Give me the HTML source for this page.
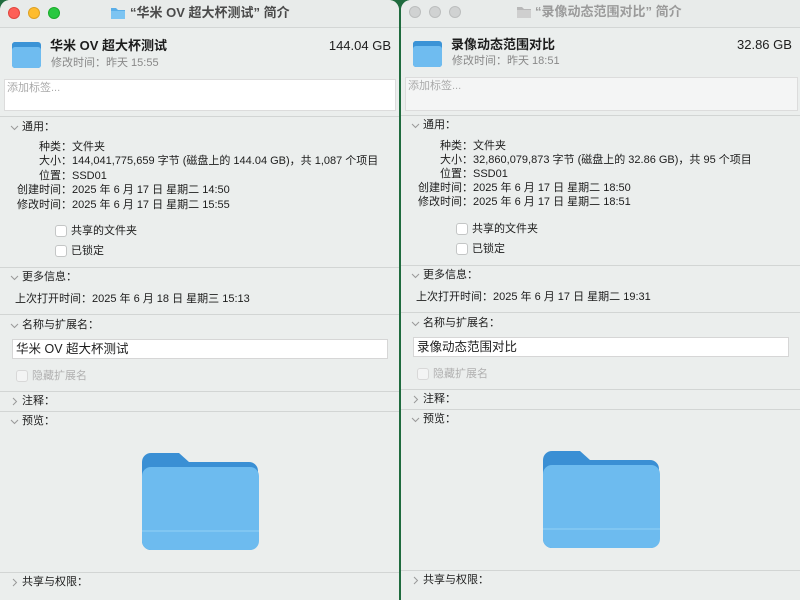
<!DOCTYPE html>
<html><head><meta charset="utf-8"><style>
*{margin:0;padding:0;box-sizing:border-box}
body{width:800px;height:589px;overflow:hidden;background:#1f6b3e;font-family:"Liberation Sans","Noto Sans CJK SC",sans-serif;font-size:11px;line-height:14px;color:#1d1d1d;position:relative}
.win{position:absolute;top:0;height:600px;background:#ebeeed;overflow:hidden}
.t{position:absolute;white-space:nowrap;line-height:14px}
.sep{position:absolute;left:0;right:0;height:1px;background:#d2d5d4}
.dot{position:absolute;width:12px;height:12px;border-radius:50%}
.cb{position:absolute;width:12px;height:12px;border:1px solid #c4c6c6;border-radius:3px;background:#fff}
.chev{position:absolute;width:9px;height:9px}
.lab{text-align:right}
</style></head><body>

<div class="win" style="left:0;width:399px;border-radius:10px 10px 0 0">
 <div style="position:absolute;left:0;top:0;right:0;height:28px;background:#e8ebea;border-bottom:1px solid #d3d6d5"></div>
 <div class="dot" style="left:8px;top:7px;background:#fe5f57;border:1px solid #e1463f"></div>
 <div class="dot" style="left:28px;top:7px;background:#febc2e;border:1px solid #dea123"></div>
 <div class="dot" style="left:48px;top:7px;background:#28c840;border:1px solid #1aab2a"></div>
 <svg style="position:absolute;left:110px;top:6px" width="16" height="14"><path d="M1 2h5l2 2h7v9H1z" fill="#5aaee8"/><path d="M1 5h14v8H1z" fill="#7cc4f2"/></svg>
 <div class="t" style="left:130px;top:5px;font-size:13px;line-height:16px;font-weight:bold;color:#4a4a4a">“华米 OV 超大杯测试” 简介</div>
 <svg style="position:absolute;left:12px;top:40px" width="30" height="30"><rect x="0" y="2" width="29" height="26" rx="3" fill="#3b93d6"/><path d="M0 5a3 3 0 0 1 3-3h8l3 3z" fill="#3b93d6"/><rect x="0" y="7" width="29" height="21" rx="3" fill="#6fbcf0"/></svg>
 <div class="t" style="left:50px;top:38px;font-size:13px;line-height:16px;font-weight:bold">华米 OV 超大杯测试</div>
 <div class="t" style="right:8px;top:38px;font-size:13px;line-height:16px">144.04 GB</div>
 <div class="t" style="left:51px;top:56px;color:#888">修改时间：昨天 15:55</div>
 <div style="position:absolute;left:4px;top:79px;width:392px;height:32px;background:#fff;border:1px solid #dcdcdc"></div>
 <div class="t" style="left:7px;top:81px;color:#aaa">添加标签...</div>
 <div class="sep" style="top:116px"></div>
 <svg class="chev" style="left:10px;top:123px"><path d="M1 3l3.5 3.5L8 3" stroke="#999" fill="none"/></svg><div class="t" style="left:22px;top:120px">通用：</div>
 <div class="t lab" style="left:0;width:72px;top:140px">种类：</div><div class="t" style="left:72px;top:140px">文件夹</div>
 <div class="t lab" style="left:0;width:72px;top:154px">大小：</div><div class="t" style="left:72px;top:154px">144,041,775,659 字节 (磁盘上的 144.04 GB)，共 1,087 个项目</div>
 <div class="t lab" style="left:0;width:72px;top:169px">位置：</div><div class="t" style="left:72px;top:169px">SSD01</div>
 <div class="t lab" style="left:0;width:72px;top:183px">创建时间：</div><div class="t" style="left:72px;top:183px">2025 年 6 月 17 日 星期二 14:50</div>
 <div class="t lab" style="left:0;width:72px;top:198px">修改时间：</div><div class="t" style="left:72px;top:198px">2025 年 6 月 17 日 星期二 15:55</div>
 <div class="cb" style="left:55px;top:225px"></div><div class="t" style="left:71px;top:224px">共享的文件夹</div>
 <div class="cb" style="left:55px;top:245px"></div><div class="t" style="left:71px;top:244px">已锁定</div>
 <div class="sep" style="top:267px"></div>
 <svg class="chev" style="left:10px;top:273px"><path d="M1 3l3.5 3.5L8 3" stroke="#999" fill="none"/></svg><div class="t" style="left:22px;top:270px">更多信息：</div>
 <div class="t" style="left:15px;top:292px">上次打开时间：2025 年 6 月 18 日 星期三 15:13</div>
 <div class="sep" style="top:314px"></div>
 <svg class="chev" style="left:10px;top:321px"><path d="M1 3l3.5 3.5L8 3" stroke="#999" fill="none"/></svg><div class="t" style="left:22px;top:318px">名称与扩展名：</div>
 <div style="position:absolute;left:12px;top:339px;width:376px;height:20px;background:#fff;border:1px solid #d6d6d6"></div>
 <div class="t" style="left:16px;top:342px;font-size:12.5px">华米 OV 超大杯测试</div>
 <div class="cb" style="left:16px;top:370px;border-color:#d8d8d8;background:#f3f4f4"></div><div class="t" style="left:32px;top:369px;color:#b0b0b0">隐藏扩展名</div>
 <div class="sep" style="top:391px"></div>
 <svg class="chev" style="left:10px;top:397px"><path d="M3 1l3.5 3.5L3 8" stroke="#999" fill="none"/></svg><div class="t" style="left:22px;top:394px">注释：</div>
 <div class="sep" style="top:411px"></div>
 <svg class="chev" style="left:10px;top:417px"><path d="M1 3l3.5 3.5L8 3" stroke="#999" fill="none"/></svg><div class="t" style="left:22px;top:414px">预览：</div>
 <svg style="position:absolute;left:140px;top:450px" width="120" height="102"><path d="M2 12a9 9 0 0 1 9-9h28l10 9h60a9 9 0 0 1 9 9v70a9 9 0 0 1-9 9H11a9 9 0 0 1-9-9z" fill="#3a8fd4"/><rect x="2" y="17" width="117" height="83" rx="9" fill="#6dbbef"/><rect x="2" y="80" width="117" height="2" fill="#80c6f2"/></svg>
 <div class="sep" style="top:572px"></div>
 <svg class="chev" style="left:10px;top:578px"><path d="M3 1l3.5 3.5L3 8" stroke="#999" fill="none"/></svg><div class="t" style="left:22px;top:575px">共享与权限：</div>
</div>

<div class="win" style="left:401px;width:410px;border-radius:10px 0 0 0">
 <div style="position:absolute;left:0;top:0;right:0;height:28px;background:#e8ebea;border-bottom:1px solid #d3d6d5"></div>
 <div class="dot" style="left:8px;top:6px;background:#d0d2d2;border:1px solid #bcbebe"></div>
 <div class="dot" style="left:28px;top:6px;background:#d0d2d2;border:1px solid #bcbebe"></div>
 <div class="dot" style="left:48px;top:6px;background:#d0d2d2;border:1px solid #bcbebe"></div>
 <svg style="position:absolute;left:115px;top:5px" width="16" height="14"><path d="M1 2h5l2 2h7v9H1z" fill="#b8b8b8"/><path d="M1 5h14v8H1z" fill="#cfcfcf"/></svg>
 <div class="t" style="left:134px;top:4px;font-size:13px;line-height:16px;font-weight:bold;color:#9a9a9a">“录像动态范围对比” 简介</div>
 <svg style="position:absolute;left:12px;top:39px" width="30" height="30"><rect x="0" y="2" width="29" height="26" rx="3" fill="#3b93d6"/><path d="M0 5a3 3 0 0 1 3-3h8l3 3z" fill="#3b93d6"/><rect x="0" y="7" width="29" height="21" rx="3" fill="#6fbcf0"/></svg>
 <div class="t" style="left:50px;top:37px;font-size:13px;line-height:16px;font-weight:bold">录像动态范围对比</div>
 <div class="t" style="left:336px;top:37px;font-size:13px;line-height:16px">32.86 GB</div>
 <div class="t" style="left:51px;top:54px;color:#888">修改时间：昨天 18:51</div>
 <div style="position:absolute;left:4px;top:77px;width:393px;height:34px;background:#f4f5f5;border:1px solid #dcdcdc"></div>
 <div class="t" style="left:7px;top:79px;color:#aaa">添加标签...</div>
 <div class="sep" style="top:115px"></div>
 <svg class="chev" style="left:10px;top:121px"><path d="M1 3l3.5 3.5L8 3" stroke="#999" fill="none"/></svg><div class="t" style="left:22px;top:118px">通用：</div>
 <div class="t lab" style="left:0;width:72px;top:139px">种类：</div><div class="t" style="left:72px;top:139px">文件夹</div>
 <div class="t lab" style="left:0;width:72px;top:153px">大小：</div><div class="t" style="left:72px;top:153px">32,860,079,873 字节 (磁盘上的 32.86 GB)，共 95 个项目</div>
 <div class="t lab" style="left:0;width:72px;top:167px">位置：</div><div class="t" style="left:72px;top:167px">SSD01</div>
 <div class="t lab" style="left:0;width:72px;top:181px">创建时间：</div><div class="t" style="left:72px;top:181px">2025 年 6 月 17 日 星期二 18:50</div>
 <div class="t lab" style="left:0;width:72px;top:195px">修改时间：</div><div class="t" style="left:72px;top:195px">2025 年 6 月 17 日 星期二 18:51</div>
 <div class="cb" style="left:55px;top:223px"></div><div class="t" style="left:71px;top:222px">共享的文件夹</div>
 <div class="cb" style="left:55px;top:243px"></div><div class="t" style="left:71px;top:242px">已锁定</div>
 <div class="sep" style="top:265px"></div>
 <svg class="chev" style="left:10px;top:271px"><path d="M1 3l3.5 3.5L8 3" stroke="#999" fill="none"/></svg><div class="t" style="left:22px;top:268px">更多信息：</div>
 <div class="t" style="left:15px;top:290px">上次打开时间：2025 年 6 月 17 日 星期二 19:31</div>
 <div class="sep" style="top:312px"></div>
 <svg class="chev" style="left:10px;top:319px"><path d="M1 3l3.5 3.5L8 3" stroke="#999" fill="none"/></svg><div class="t" style="left:22px;top:316px">名称与扩展名：</div>
 <div style="position:absolute;left:12px;top:337px;width:376px;height:20px;background:#fff;border:1px solid #d6d6d6"></div>
 <div class="t" style="left:16px;top:340px;font-size:12.5px">录像动态范围对比</div>
 <div class="cb" style="left:16px;top:368px;border-color:#d8d8d8;background:#f3f4f4"></div><div class="t" style="left:32px;top:367px;color:#b0b0b0">隐藏扩展名</div>
 <div class="sep" style="top:389px"></div>
 <svg class="chev" style="left:10px;top:395px"><path d="M3 1l3.5 3.5L3 8" stroke="#999" fill="none"/></svg><div class="t" style="left:22px;top:392px">注释：</div>
 <div class="sep" style="top:409px"></div>
 <svg class="chev" style="left:10px;top:415px"><path d="M1 3l3.5 3.5L8 3" stroke="#999" fill="none"/></svg><div class="t" style="left:22px;top:412px">预览：</div>
 <svg style="position:absolute;left:140px;top:448px" width="120" height="102"><path d="M2 12a9 9 0 0 1 9-9h28l10 9h60a9 9 0 0 1 9 9v70a9 9 0 0 1-9 9H11a9 9 0 0 1-9-9z" fill="#3a8fd4"/><rect x="2" y="17" width="117" height="83" rx="9" fill="#6dbbef"/><rect x="2" y="80" width="117" height="2" fill="#80c6f2"/></svg>
 <div class="sep" style="top:570px"></div>
 <svg class="chev" style="left:10px;top:576px"><path d="M3 1l3.5 3.5L3 8" stroke="#999" fill="none"/></svg><div class="t" style="left:22px;top:573px">共享与权限：</div>
</div>
</body></html>
